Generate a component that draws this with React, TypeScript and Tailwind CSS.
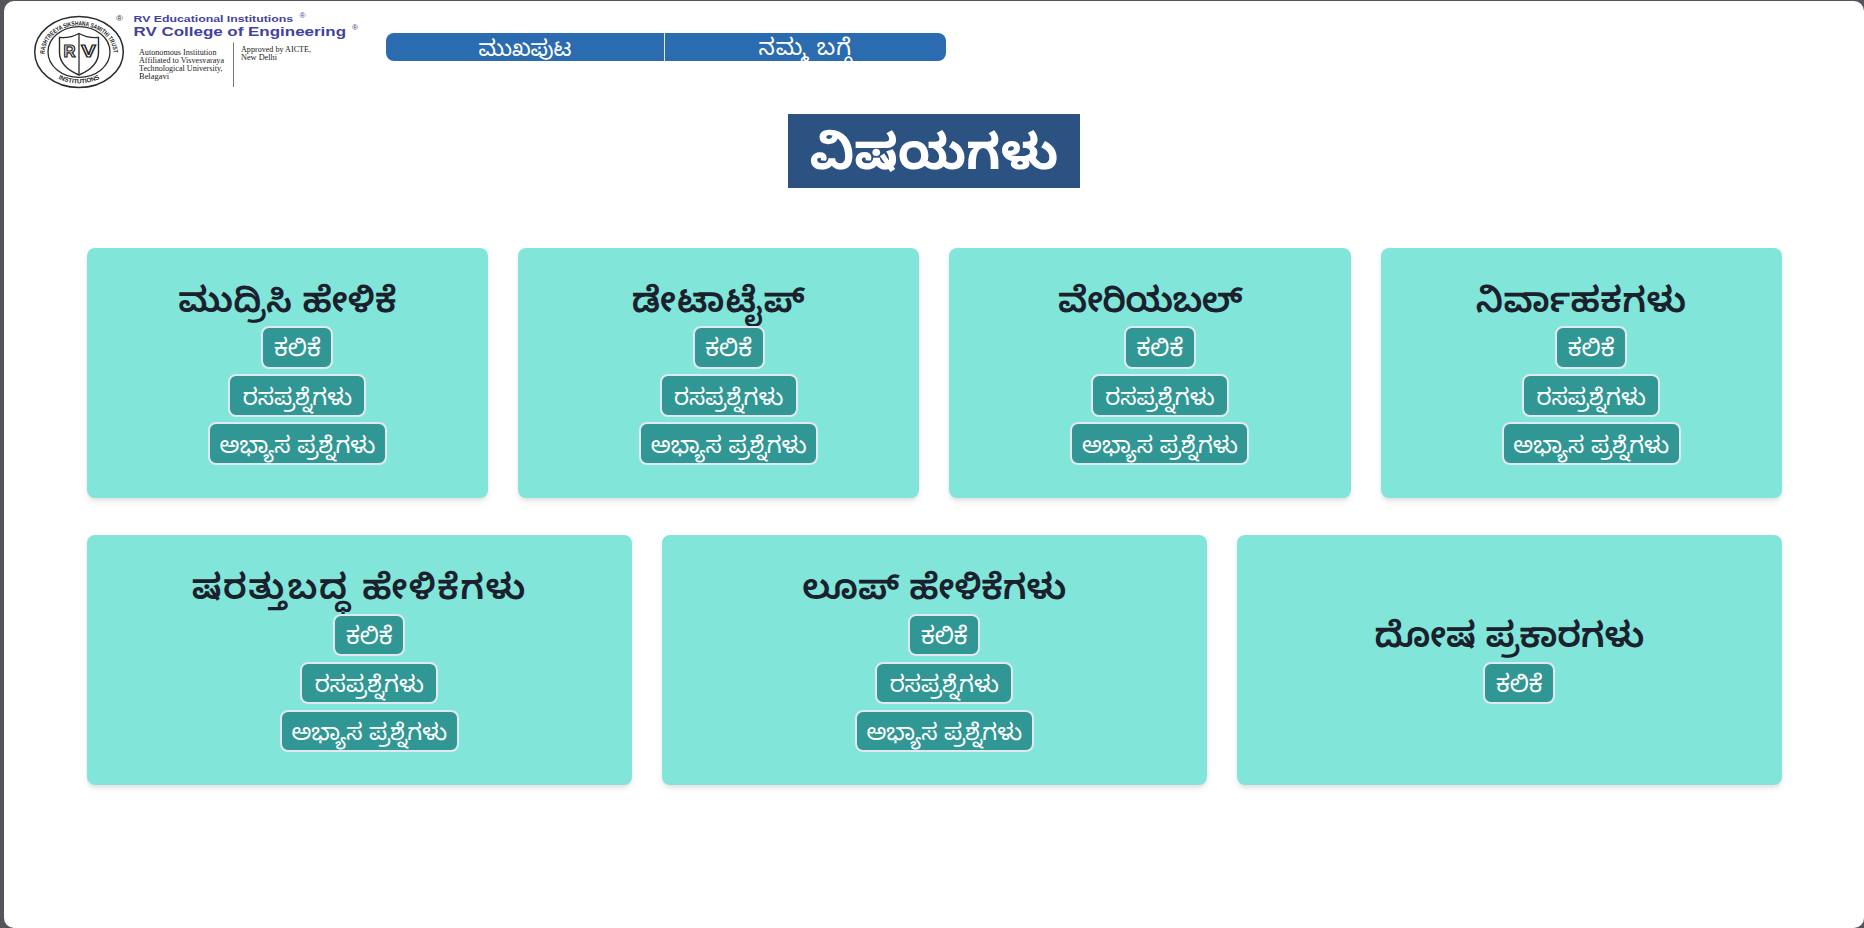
import React from "react";

const LEARN = "ಕಲಿಕೆ";
const QUIZ = "ರಸಪ್ರಶ್ನೆಗಳು";
const PRACTICE = "ಅಭ್ಯಾಸ ಪ್ರಶ್ನೆಗಳು";

type Topic = { title: string; links: string[]; tracking: string };

const firstRow: Topic[] = [
  { title: "ಮುದ್ರಿಸಿ ಹೇಳಿಕೆ", links: [LEARN, QUIZ, PRACTICE], tracking: "tracking-[0.2px]" },
  { title: "ಡೇಟಾಟೈಪ್", links: [LEARN, QUIZ, PRACTICE], tracking: "tracking-[1px]" },
  { title: "ವೇರಿಯಬಲ್", links: [LEARN, QUIZ, PRACTICE], tracking: "tracking-[-0.7px]" },
  { title: "ನಿರ್ವಾಹಕಗಳು", links: [LEARN, QUIZ, PRACTICE], tracking: "tracking-[0.4px]" },
];

const secondRow: Topic[] = [
  { title: "ಷರತ್ತುಬದ್ಧ ಹೇಳಿಕೆಗಳು", links: [LEARN, QUIZ, PRACTICE], tracking: "tracking-[1.5px]" },
  { title: "ಲೂಪ್ ಹೇಳಿಕೆಗಳು", links: [LEARN, QUIZ, PRACTICE], tracking: "tracking-normal" },
  { title: "ದೋಷ ಪ್ರಕಾರಗಳು", links: [LEARN], tracking: "tracking-[-0.2px]" },
];

const linkStyle: Record<string, string> = {
  [LEARN]: "w-[72px] text-[24px]",
  [QUIZ]: "w-[138px] text-[23px]",
  [PRACTICE]: "w-[179px] text-[23px]",
};

function TopicCard({ title, links, tracking }: Topic) {
  return (
    <div className="flex h-[250px] flex-1 flex-col items-center justify-center rounded-lg bg-[#81e6d9] shadow-[0_4px_6px_-1px_rgba(0,0,0,0.1),0_2px_4px_-1px_rgba(0,0,0,0.06)]">
      <h2
        className={`flex h-[51.6px] items-center whitespace-nowrap pt-[13px] text-[35px] font-semibold leading-none text-[#1a202c] ${tracking}`}
      >
        {title}
      </h2>
      <div className="ml-[20px] flex flex-col items-center">
        {links.map((link) => (
          <button
            key={link}
            className={`mb-[5.6px] flex h-[42.4px] items-center justify-center whitespace-nowrap rounded-lg border-2 border-[#e2e8f0] bg-[#319795] pt-[11px] leading-none text-white ${linkStyle[link]}`}
          >
            {link}
          </button>
        ))}
      </div>
    </div>
  );
}

type LineProps = { x: number; y: number; w: number; size: number; children: string };

function Line({ x, y, w, size, children }: LineProps) {
  return (
    <text x={x} y={y} fontSize={size} textLength={w} lengthAdjust="spacingAndGlyphs">
      {children}
    </text>
  );
}

function Logo() {
  return (
    <svg className="h-[84px] w-[336px]" viewBox="28 10 336 84" fill="none">
      <defs>
        <path id="arcTop" d="M44.5 54 A34.500 28.500 0 0 1 113.500 54" />
        <path id="arcBottom" d="M40 52 A39 31.500 0 0 0 118 52" />
      </defs>
      <g stroke="#2b2b2b">
        <ellipse cx="79" cy="52" rx="44.3" ry="35.5" strokeWidth="1.5" />
        <ellipse cx="79" cy="52" rx="31" ry="25.3" strokeWidth="1.3" />
        <path
          d="M59.5 37.500 Q70 38.500 79 33.500 Q88 38.500 98.500 37.500 V53 Q98 67 79 75 Q60 67 59.500 53 Z"
          strokeWidth="1.4"
        />
        <path d="M79 33.500V75" strokeWidth="1.3" />
      </g>
      <g className="font-['Liberation_Sans',sans-serif]" fontWeight="700">
        <g fill="#222">
          <text fontSize="6.4">
            <textPath href="#arcTop" textLength="98" lengthAdjust="spacingAndGlyphs">
              RASHTREEYA SIKSHANA SAMITHI TRUST
            </textPath>
          </text>
          <text fontSize="6.4" textAnchor="middle">
            <textPath href="#arcBottom" startOffset="50%" textLength="43" lengthAdjust="spacingAndGlyphs">
              INSTITUTIONS
            </textPath>
          </text>
        </g>
        <g fill="#fff" stroke="#222" strokeWidth="1.2">
          <Line x={63.5} y={57.2} w={12} size={16.5}>R</Line>
          <Line x={81.3} y={57.2} w={14.5} size={16.5}>V</Line>
        </g>
        <g fill="#42429c">
          <Line x={133.5} y={22} w={159.5} size={9}>RV Educational Institutions</Line>
          <Line x={133.5} y={36.3} w={212.5} size={13.2}>RV College of Engineering</Line>
        </g>
      </g>
      <g className="font-['Liberation_Sans',sans-serif]">
        <g fill="#333">
          <Line x={116} y={21} w={7} size={8}>®</Line>
        </g>
        <g fill="#42429c">
          <Line x={299.5} y={18} w={6} size={6.5}>®</Line>
          <Line x={352} y={30} w={6} size={6.5}>®</Line>
        </g>
      </g>
      <path d="M233.500 42.500V87" stroke="#777" strokeWidth="1" />
      <g className="font-['Liberation_Serif',serif]" fill="#222">
        <Line x={139} y={54.5} w={77.5} size={7.4}>Autonomous Institution</Line>
        <Line x={139} y={62.7} w={85} size={7.4}>Affiliated to Visvesvaraya</Line>
        <Line x={139} y={70.5} w={83.5} size={7.4}>Technological University,</Line>
        <Line x={139} y={78.5} w={30} size={7.4}>Belagavi</Line>
        <Line x={241} y={52.4} w={70} size={7.4}>Approved by AICTE,</Line>
        <Line x={241} y={60.4} w={36} size={7.4}>New Delhi</Line>
      </g>
    </svg>
  );
}

export default function App() {
  return (
    <div className="h-[928px] w-full overflow-hidden bg-[#55545a] pl-1 pt-px font-['Noto_Sans_Kannada','Noto_Sans',sans-serif]">
      <div className="flex h-[927px] flex-col rounded-[10px] bg-white">
        <header className="flex h-[113px] items-start pl-6 pt-[9px]">
          <Logo />
          <nav className="ml-[22px] mt-[23px] flex h-7 w-[560px] overflow-hidden rounded-lg bg-[#2b6cb0] text-[22px] leading-7 text-white">
            <a className="w-[279px] border-r border-[#e2e8f0] pt-[6px] text-center">ಮುಖಪುಟ</a>
            <a className="flex-1 pt-[5px] text-center text-[23px] tracking-[1px]">
              ನಮ್ಮ ಬಗ್ಗೆ
            </a>
          </nav>
        </header>
        <h1 className="flex h-[74px] w-[292px] items-center justify-center self-center whitespace-nowrap bg-[#2c5282] pt-[23px] text-[49.4px] font-bold leading-none text-white">
          ವಿಷಯಗಳು
        </h1>
        <main className="mt-[59.6px] flex flex-col gap-[37.5px] pl-[82.8px] pr-[82.2px]">
          <div className="flex gap-[30px]">
            {firstRow.map((t) => (
              <TopicCard key={t.title} {...t} />
            ))}
          </div>
          <div className="flex gap-[30px]">
            {secondRow.map((t) => (
              <TopicCard key={t.title} {...t} />
            ))}
          </div>
        </main>
      </div>
    </div>
  );
}
